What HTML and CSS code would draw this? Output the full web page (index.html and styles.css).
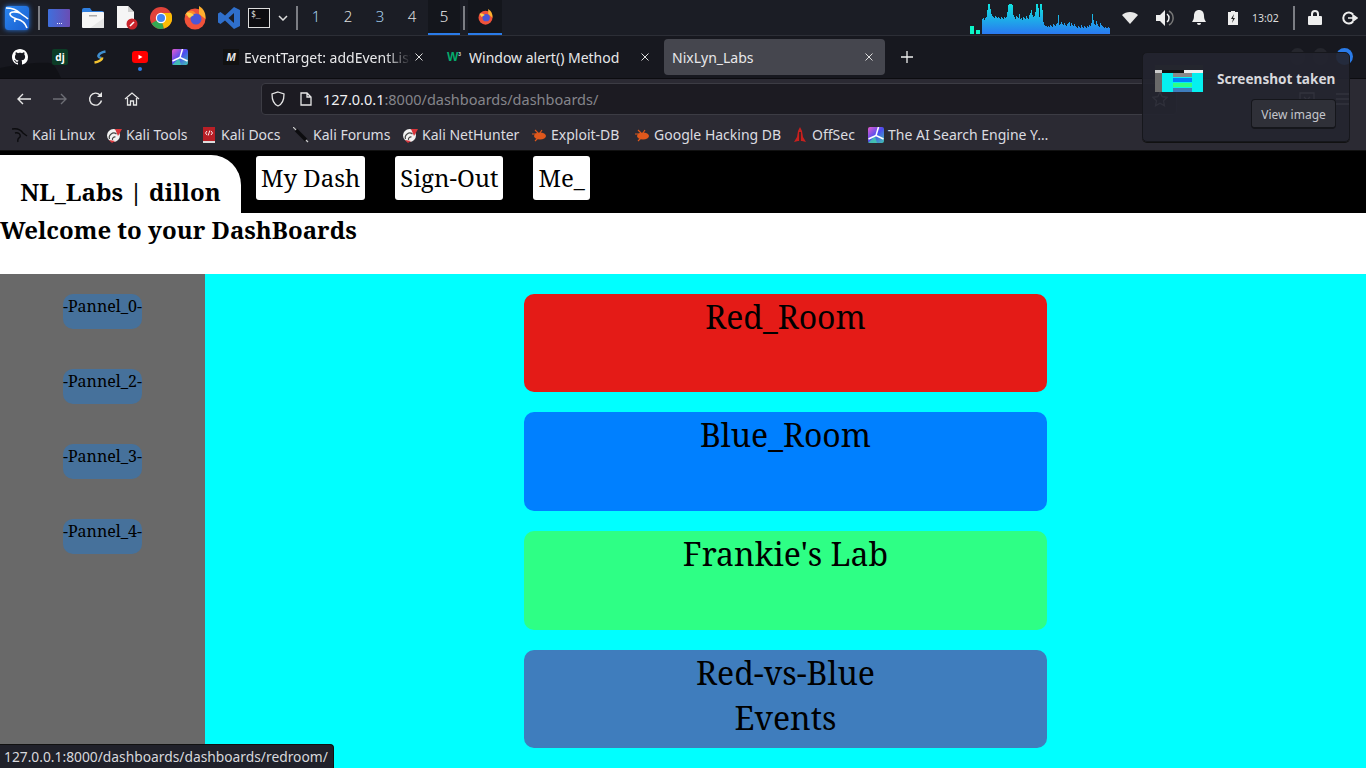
FILE: index.html
```html
<!DOCTYPE html>
<html lang="en">
<head>
<meta charset="utf-8">
<title>NixLyn_Labs</title>
<link rel="stylesheet" href="styles.css">
</head>
<body>
<header class="panel">
  <div class="panel-left">
    <div class="kali"><svg viewBox="0 0 24 24" width="24" height="24"><path d="M1 2C6 2 12 4 15 7c2 2 5 3 8 6M15 7C10 5 5 6 5 8c0 3 4 4 7 5 4 1 8 3 10 9M12 13c-2 0-3 1-2 3" fill="none" stroke="#fff" stroke-width="1.600"/></svg></div>
    <i class="sep sep-a"></i>
    <svg class="app" viewBox="0 0 22 18" width="22" height="18"><defs><linearGradient id="ag" x1="0" y1="0" x2="1" y2="0"><stop offset="0" stop-color="#3f6fdc"/><stop offset="1" stop-color="#6a4db4"/></linearGradient></defs><rect width="22" height="18" rx="1" fill="url(#ag)"/><path d="M9 14.500h1M11 14.500h1M13 14.500h1" stroke="#e8ebff" stroke-width="1.200"/></svg>
    <svg class="app" viewBox="0 0 22 20" width="22" height="20"><path d="M2 0h6l2 3h10a2 2 0 0 1 2 2v3H0V2a2 2 0 0 1 2-2z" fill="#2f7fe0"/><rect y="4" width="22" height="16" rx="1" fill="#f6f6f6"/><rect x="7" y="7" width="8" height="1.500" fill="#aaa"/><path d="M22 10v9a1 1 0 0 1-1 1H8z" fill="#e6e6e6"/></svg>
    <svg class="app" viewBox="0 0 22 24" width="22" height="24"><path d="M1 0h11l6 6v16H1z" fill="#f5f5f5"/><path d="M12 0l6 6h-6z" fill="#cfcfcf"/><circle cx="16" cy="18" r="5.500" fill="#c9242b"/><path d="M14 20l4-4" stroke="#fff" stroke-width="1.600"/></svg>
    <svg class="app" viewBox="0 0 22 22" width="22" height="22"><circle cx="11" cy="11" r="11" fill="#e0433a"/><path d="M11 11L1.500 16.500A11 11 0 0 0 14 21.600z" fill="#34a853"/><path d="M11 11l3 10.600A11 11 0 0 0 21 6H11z" fill="#fbbc05"/><circle cx="11" cy="11" r="5.200" fill="#fff"/><circle cx="11" cy="11" r="4" fill="#4285f4"/></svg>
    <svg class="app" viewBox="0 0 22 24" width="22" height="24"><circle cx="11" cy="13" r="10.500" fill="#f0523a"/><path d="M15 0c5 3 7 8 6.500 13L15 8z" fill="#ffb02e"/><path d="M1 9c2-4 5-5 8-4l5 4-7 3z" fill="#ff8a2a"/><circle cx="12" cy="13" r="5.500" fill="#4a56d6"/><path d="M2 7c3-1 6 0 8 2L5 12z" fill="#ffcf4a"/></svg>
    <svg class="app app-code" viewBox="0 0 22 22" width="22" height="22"><path d="M16 0l6 3v16l-6 3L7 13.500 2.500 17 0 15.500v-9L2.500 5 7 8.500zM16 6l-5.500 5 5.500 5z" fill="#2f6fcb"/></svg>
    <div class="term">$_</div>
    <svg class="chev" viewBox="0 0 10 6" width="10" height="6"><path d="M1 1l4 4 4-4" fill="none" stroke="#ddd" stroke-width="1.500"/></svg>
    <i class="sep"></i>
    <div class="workspaces">
      <span class="ws ws-blue">1</span><span class="ws">2</span><span class="ws ws-blue">3</span><span class="ws">4</span><span class="ws active">5</span>
    </div>
    <i class="sep"></i>
    <div class="task"><svg viewBox="0 0 22 24" width="15" height="16"><circle cx="11" cy="13" r="10.500" fill="#f0523a"/><path d="M15 0c5 3 7 8 6.500 13L15 8z" fill="#ffb02e"/><circle cx="12" cy="13" r="5.500" fill="#4a56d6"/><path d="M2 7c3-1 6 0 8 2L5 12z" fill="#ffcf4a"/></svg></div>
  </div>
  <div class="panel-right">
    <div class="graph" id="graph"><i class="cpu cpu-a"></i><i class="cpu cpu-b"></i></div>
    <svg class="tray tray-wifi" viewBox="0 0 16 12" width="16" height="12"><path d="M0 3c4-4 12-4 16 0l-8 9z" fill="#e8e8e8"/></svg>
    <svg class="tray tray-vol" viewBox="0 0 18 16" width="18" height="16"><path d="M0 5h4l5-5v16l-5-5H0z" fill="#eee"/><path d="M11 4a5 5 0 0 1 0 8" fill="none" stroke="#eee" stroke-width="1.500"/><path d="M13 1a8 8 0 0 1 0 14" fill="none" stroke="#777" stroke-width="1.500"/></svg>
    <svg class="tray tray-bell" viewBox="0 0 14 15" width="14" height="15"><path d="M7 0c3 0 5 2 5 6 0 3 1 4 2 6H0c1-2 2-3 2-6 0-4 2-6 5-6zM5 13h4a2 2 0 0 1-4 0z" fill="#eee"/></svg>
    <svg class="tray tray-bat" viewBox="0 0 10 14" width="10" height="14"><path d="M3 0h4v1h3v13H0V1h3z" fill="#eee"/><path d="M6 3L3 8h2l-1 4 3-5H5z" fill="#222"/></svg>
    <span class="clock">13:02</span>
    <i class="sep sep-r"></i>
    <svg class="tray tray-lock" viewBox="0 0 14 15" width="14" height="15"><path d="M3 6V4a4 4 0 0 1 8 0v2h2a1 1 0 0 1 1 1v7a1 1 0 0 1-1 1H1a1 1 0 0 1-1-1V7a1 1 0 0 1 1-1zm2 0h4V4a2 2 0 0 0-4 0z" fill="#eee"/></svg>
    <svg class="tray tray-exit" viewBox="0 0 16 14" width="16" height="14"><path d="M11 3.500A5.500 5.500 0 1 0 11 10.500" fill="none" stroke="#eee" stroke-width="2"/><path d="M6 7h6M11 4l4 3-4 3z" fill="#eee" stroke="#eee" stroke-width="1.500"/></svg>
  </div>
</header>

<section class="tabbar">
  <svg class="wallpaper" viewBox="0 0 70 16" width="70" height="16"><path d="M0 6C20 2 40 0 50 1c4 1 8 8 11 15H0z" fill="#101116"/></svg>
  <div class="pins">
    <svg class="pin" viewBox="0 0 16 16" width="16" height="16"><path fill="#fff" d="M8 0C3.580 0 0 3.580 0 8c0 3.540 2.290 6.530 5.470 7.590.4.070.55-.17.55-.38 0-.19-.01-.82-.01-1.490-2.010.37-2.530-.49-2.690-.94-.09-.23-.48-.94-.82-1.130-.28-.15-.68-.52-.01-.53.63-.01 1.080.58 1.230.82.720 1.210 1.870.87 2.330.66.070-.52.280-.87.510-1.070-1.780-.2-3.640-.89-3.640-3.950 0-.87.310-1.590.82-2.150-.08-.2-.36-1.020.08-2.120 0 0 .67-.21 2.200.82.640-.18 1.320-.27 2-.27s1.360.09 2 .27c1.530-1.040 2.200-.82 2.200-.82.440 1.100.16 1.920.08 2.120.51.560.82 1.270.82 2.150 0 3.070-1.870 3.750-3.650 3.950.29.250.54.730.54 1.480 0 1.070-.01 1.930-.01 2.200 0 .21.150.46.550.38A8.010 8.010 0 0 0 16 8c0-4.420-3.580-8-8-8z"/></svg>
    <span class="pin pin-dj">dj</span>
    <svg class="pin" viewBox="0 0 16 16" width="16" height="16"><path d="M13.500 2.500C10 3 6 5 6.500 7.500c.3 1 1.500 1.300 3 1.200" fill="none" stroke="#3f8fd0" stroke-width="2.600"/><path d="M2.500 13.500C6 13 10.500 11 10 8.500" fill="none" stroke="#f2c230" stroke-width="2.600"/></svg>
    <span class="pin pin-yt"><svg viewBox="0 0 16 12" width="16" height="12"><rect width="16" height="12" rx="3" fill="#f00"/><path d="M6.500 3.800l4 2.200-4 2.200z" fill="#fff"/></svg><i class="dot"></i></span>
    <svg class="pin" viewBox="0 0 16 16" width="16" height="16"><defs><linearGradient id="pg" x1="0" y1="0" x2="1" y2="1"><stop offset="0" stop-color="#e85bd0"/><stop offset=".5" stop-color="#4a4cf0"/><stop offset="1" stop-color="#40c8b0"/></linearGradient></defs><rect width="16" height="16" rx="2" fill="url(#pg)"/><path d="M0 16h9L7 9z" fill="#40e0a0" opacity=".7"/><path d="M8 8.500L10.500 0M8 8.500L0.500 12M8 8.500l7.500 3.500" stroke="#fff" stroke-width="1.500"/></svg>
  </div>
  <div class="tab tab-1"><span class="fav-m">M</span><span class="tab-label fade">EventTarget: addEventList</span><svg class="tab-x" viewBox="0 0 10 10" width="10" height="10"><path d="M1.500 1.500l7 7M8.500 1.500l-7 7" stroke="#ddd" stroke-width="1"/></svg></div>
  <div class="tab tab-2"><span class="fav-w">W<sup>3</sup></span><span class="tab-label">Window alert() Method</span><svg class="tab-x" viewBox="0 0 10 10" width="10" height="10"><path d="M1.500 1.500l7 7M8.500 1.500l-7 7" stroke="#ddd" stroke-width="1"/></svg></div>
  <div class="tab tab-3"><span class="tab-label">NixLyn_Labs</span><svg class="tab-x" viewBox="0 0 10 10" width="10" height="10"><path d="M1.500 1.500l7 7M8.500 1.500l-7 7" stroke="#ddd" stroke-width="1"/></svg></div>
  <svg class="newtab" viewBox="0 0 14 14" width="14" height="14"><path d="M7 1v12M1 7h12" stroke="#eee" stroke-width="1.300"/></svg>
  <div class="ghosts"><i class="ghost"></i><i class="ghost"></i><i class="ghost ghost-blue"></i></div>
</section>

<nav class="navbar">
  <svg class="nav-ico" viewBox="0 0 16 16" width="16" height="16"><path d="M15 8H2M7 3L2 8l5 5" fill="none" stroke="#e6e6e6" stroke-width="1.400"/></svg>
  <svg class="nav-ico" viewBox="0 0 16 16" width="16" height="16"><path d="M1 8h13M9 3l5 5-5 5" fill="none" stroke="#6d6e75" stroke-width="1.400"/></svg>
  <svg class="nav-ico" viewBox="0 0 16 16" width="16" height="16"><path d="M13.500 9.500A6 6 0 1 1 12 4" fill="none" stroke="#e6e6e6" stroke-width="1.400"/><path d="M14 1v5H9z" fill="#e6e6e6"/></svg>
  <svg class="nav-ico" viewBox="0 0 16 16" width="16" height="16"><path d="M1 8l7-6 7 6M3.500 7v7h3v-4h3v4h3V7" fill="none" stroke="#e6e6e6" stroke-width="1.300"/></svg>
  <div class="urlbar">
    <svg class="url-ico url-shield" viewBox="0 0 16 16" width="16" height="16"><path d="M8 1l6 2c0 6-1 10-6 12C3 13 2 9 2 3z" fill="none" stroke="#e6e6e6" stroke-width="1.300"/></svg>
    <svg class="url-ico" viewBox="0 0 12 14" width="12" height="14"><path d="M1 1h6l4 4v8H1zM7 1v4h4" fill="none" stroke="#e6e6e6" stroke-width="1.300"/></svg>
    <span class="url"><b>127.0.0.1</b>:8000/dashboards/dashboards/</span>
    <svg class="star" viewBox="0 0 16 16" width="16" height="16"><path d="M8 1l2.200 4.700 5 .6-3.700 3.500 1 5L8 12.300 3.500 14.800l1-5L.8 6.300l5-.6z" fill="none" stroke="#c8c8cc" stroke-width="1.200"/></svg>
  </div>
  <svg class="nav-ico pocket" viewBox="0 0 16 16" width="16" height="16"><path d="M1 2h14v6a7 7 0 0 1-14 0zM5 6l3 3 3-3" fill="none" stroke="#ddd" stroke-width="1.300"/></svg>
  <svg class="nav-ico" viewBox="0 0 16 16" width="16" height="16"><path d="M1 3h14M1 8h14M1 13h14" stroke="#ddd" stroke-width="1.300"/></svg>
</nav>

<section class="bookmarks">
  <span class="bm"><svg viewBox="0 0 16 16" width="16" height="16"><path d="M0 2c5-1 9 1 11 4l4 3M3 6c3-1 6 1 5 4-1 1-3 1-2 5" fill="none" stroke="#0c0c0f" stroke-width="1.400"/></svg>Kali Linux</span>
  <span class="bm"><svg viewBox="0 0 16 16" width="16" height="16"><circle cx="7.500" cy="8.500" r="6.500" fill="#f2f2f2"/><path d="M9 2h7l-4 7zM3 13l3 3 3-2z" fill="#d8343a"/><path d="M3.500 12a4.500 4.500 0 0 1 7-5M6.500 13a2.500 2.500 0 0 1 3-3" fill="none" stroke="#444" stroke-width="1.200"/></svg>Kali Tools</span>
  <span class="bm"><svg viewBox="0 0 16 16" width="16" height="16"><rect x="2" y="0" width="12" height="15" fill="#b81f26"/><rect x="2" y="14" width="12" height="2" fill="#ddd"/><path d="M6 4L4.500 6 6 8M10 4l1.500 2L10 8M8.800 3.500L7.200 8.500" stroke="#fff" fill="none" stroke-width=".9"/></svg>Kali Docs</span>
  <span class="bm"><svg viewBox="0 0 16 16" width="16" height="16"><path d="M0 0l15 15" stroke="#ccc" stroke-width="1.200"/><path d="M3 3l10 10" stroke="#0c0c0f" stroke-width="3.500"/></svg>Kali Forums</span>
  <span class="bm"><svg viewBox="0 0 16 16" width="16" height="16"><circle cx="7.500" cy="8.500" r="6.500" fill="#f2f2f2"/><path d="M9 2h7l-4 7zM3 13l3 3 3-2z" fill="#d8343a"/><path d="M3.500 12a4.500 4.500 0 0 1 7-5M6.500 13a2.500 2.500 0 0 1 3-3" fill="none" stroke="#444" stroke-width="1.200"/></svg>Kali NetHunter</span>
  <span class="bm"><svg viewBox="0 0 16 16" width="16" height="16"><ellipse cx="9" cy="9" rx="6" ry="3.500" fill="#e0581c"/><path d="M1 7h5M4 3l3 3M4 14l3-3M11 3L9 6" stroke="#e0581c" stroke-width="1.200"/></svg>Exploit-DB</span>
  <span class="bm"><svg viewBox="0 0 16 16" width="16" height="16"><ellipse cx="9" cy="9" rx="6" ry="3.500" fill="#e0581c"/><path d="M1 7h5M4 3l3 3M4 14l3-3M11 3L9 6" stroke="#e0581c" stroke-width="1.200"/></svg>Google Hacking DB</span>
  <span class="bm"><svg viewBox="0 0 16 16" width="16" height="16"><path d="M8 0l2 4 1 6 3 5-4-1H6l-4 1 3-5 1-6z" fill="#c8201f"/><path d="M8 5v9" stroke="#222" stroke-width="1.500"/></svg>OffSec</span>
  <span class="bm"><svg viewBox="0 0 16 16" width="16" height="16"><rect width="16" height="16" rx="2" fill="url(#pg)"/><path d="M0 16h9L7 9z" fill="#40e0a0" opacity=".7"/><path d="M8 8.500L10.500 0M8 8.500L0.500 12M8 8.500l7.500 3.500" stroke="#fff" stroke-width="1.500"/></svg>The AI Search Engine Y…</span>
</section>

<main class="page">
  <div class="site-nav">
    <div class="brand">NL_Labs | dillon</div>
    <a class="nav-btn nb-1">My Dash</a>
    <a class="nav-btn nb-2">Sign-Out</a>
    <a class="nav-btn nb-3">Me_</a>
  </div>
  <h1 class="welcome">Welcome to your DashBoards</h1>
  <div class="dash">
    <aside class="side">
      <a class="pannel">-Pannel_0-</a>
      <a class="pannel">-Pannel_2-</a>
      <a class="pannel">-Pannel_3-</a>
      <a class="pannel">-Pannel_4-</a>
    </aside>
    <div class="rooms">
      <a class="room red">Red_Room</a>
      <a class="room blue">Blue_Room</a>
      <a class="room green">Frankie's Lab</a>
      <a class="room steel">Red-vs-Blue<br>Events</a>
    </div>
  </div>
</main>

<div class="status">127.0.0.1:8000/dashboards/dashboards/redroom/</div>

<aside class="toast">
  <div class="thumb">
    <i class="th-top"></i><i class="th-white"></i>
    <div class="th-body"><i class="th-side"></i><div class="th-main"><i class="th-r"></i><i class="th-b"></i><i class="th-g"></i><i class="th-s"></i></div></div>
  </div>
  <div class="toast-title">Screenshot taken</div>
  <div class="toast-btn">View image</div>
</aside>
<script src="graph.js"></script>
</body>
</html>
```
FILE: styles.css
```css
* { box-sizing: border-box; }
html, body { margin: 0; height: 768px; overflow: hidden; }
body { position: relative; background: #000; font-family: "Noto Sans", sans-serif; }

.panel { height: 36px; background: #1b1d25; border-bottom: 1px solid #2c2e36; display: flex; justify-content: space-between; color: #eee; }
.panel-left, .panel-right { display: flex; align-items: center; }
.kali { width: 24px; height: 24px; margin-left: 5px; background: linear-gradient(135deg, #2a86f0, #1a5fd0); border-radius: 3px; box-shadow: 0 0 5px #2a7be8; flex: none; }
.kali svg { display: block; }
.sep { width: 2px; height: 24px; background: #7c7e84; display: block; flex: none; }
.sep-a { margin: 0 8px 0 9px; }
.app { margin-right: 12px; flex: none; }
.app-code { margin-right: 8px; }
.term { width: 22px; height: 20px; background: #0c0c10; border: 1px solid #ddd; font: 8px/12px "DejaVu Sans Mono", monospace; padding-left: 2px; color: #eee; flex: none; }
.chev { margin: 0 8px; flex: none; }
.workspaces { display: flex; margin: 0 3px 0 2px; height: 35px; }
.ws { width: 32px; height: 35px; text-align: center; font-size: 15px; font-weight: 300; line-height: 33px; color: #ddd; }
.ws-blue { color: #a8d0f0; }
.ws.active { background: #14161c; border-bottom: 2px solid #2a7be8; color: #eee; }
.task { width: 34px; height: 35px; margin-left: 3px; background: #14161c; border-bottom: 2px solid #2a7be8; display: flex; align-items: center; justify-content: center; }
.panel-right { padding-right: 8px; }
.graph { width: 140px; height: 30px; display: flex; align-items: flex-end; margin-right: 12px; align-self: flex-end; margin-bottom: 1px; overflow: hidden; }
.graph i { display: block; flex: none; width: 1px; background: linear-gradient(#10e4e0, #2a78f0) bottom / 100% 30px no-repeat; }
.graph .cpu { background: #0cf5c8; }
.graph .cpu-a { width: 4px; height: 8px; margin-right: 2px; }
.graph .cpu-b { width: 4px; height: 4px; margin-right: 2px; }
.tray { flex: none; }
.tray-wifi { margin-right: 18px; }
.tray-vol { margin-right: 18px; }
.tray-bell { margin-right: 22px; }
.tray-bat { margin-right: 14px; }
.clock { font-size: 10.5px; color: #ddd; margin-right: 14px; width: 27px; white-space: nowrap; }
.sep-r { margin-right: 13px; }
.tray-lock { margin-right: 20px; }

.tabbar { position: relative; height: 43px; background: #17181f; display: flex; align-items: center; color: #e8e8ea; font-size: 14px; border-bottom: 1px solid #0c0c10; }
.wallpaper { position: absolute; left: 0; bottom: 0; }
.pins { position: relative; display: flex; align-items: center; width: 215px; padding-left: 12px; gap: 24px; flex: none; }
.pin { flex: none; }
.pin-dj { width: 16px; height: 16px; background: #0c3c26; border-radius: 2px; color: #fff; font: bold 10px/16px "Noto Sans", sans-serif; text-align: center; }
.pin-yt { position: relative; display: block; width: 16px; height: 12px; line-height: 0; }
.dot { position: absolute; left: 6px; top: 16px; width: 4px; height: 4px; border-radius: 50%; background: #2a7be8; }
.tab { height: 36px; display: flex; align-items: center; border-radius: 4px; padding: 0 8px; position: relative; flex: none; }
.tab-1 { width: 220px; }
.tab-2 { width: 222px; margin-left: 4px; }
.tab-3 { width: 221px; margin-left: 3px; background: #45464e; }
.tab-label { white-space: nowrap; overflow: hidden; flex: 1; }
.fade { -webkit-mask-image: linear-gradient(90deg, #000 85%, transparent); mask-image: linear-gradient(90deg, #000 85%, transparent); }
.fav-m { font: italic bold 11px/16px "Liberation Sans", sans-serif; width: 16px; margin-right: 5px; background: #111; text-align: center; flex: none; }
.fav-w { font: bold 12px/16px "Liberation Sans", sans-serif; width: 16px; margin-right: 6px; color: #04aa6d; flex: none; white-space: nowrap; }
.fav-w sup { font-size: 5px; line-height: 0; color: #ccc; }
.tab-x { margin: 0 3px 0 3px; flex: none; }
.newtab { margin-left: 15px; flex: none; }
.ghosts { position: absolute; left: 1290px; top: 12px; display: flex; gap: 8px; }
.ghost { display: block; width: 15px; height: 17px; border-radius: 50%; background: #25262d; }
.ghost-blue { width: 17px; background: #2a7be8; margin-left: 0; }

.navbar { height: 42px; background: #2b2a33; display: flex; align-items: center; padding: 0 0 2px 16px; }
.nav-ico { flex: none; margin-right: 20px; }
.urlbar { width: 916px; height: 32px; margin: 0 0 0 101px; background: #1c1b22; border: 1px solid #3c3c44; border-radius: 4px; display: flex; align-items: center; padding-left: 8px; flex: none; }
.pocket { margin-left: 122px; }
.url-ico { margin-right: 11px; flex: none; }
.url-shield { margin-right: 14px; }
.url { font-size: 14.5px; color: #85858b; white-space: nowrap; }
.url b { font-weight: 400; color: #f0f0f2; }
.star { margin-left: auto; margin-right: 8px; flex: none; }

.bookmarks { height: 30px; background: #2b2a33; display: grid; grid-template-columns: 94px 95px 92px 109px 129px 103px 158px 76px auto; align-items: center; padding: 0 0 2px 12px; font-size: 14px; color: #dcdce0; overflow: hidden; border-bottom: 1px solid #111; }
.bm { display: flex; align-items: center; gap: 4px; white-space: nowrap; }
.bm svg { flex: none; }

.page { height: 617px; background: #fff; font-family: "Noto Serif", "Droid Serif", "DejaVu Serif", serif; color: #000; overflow: hidden; }
.site-nav { height: 62px; background: #000; display: flex; align-items: flex-start; padding-top: 4px; }
.brand { width: 241px; height: 58px; background: #fff; border-top-right-radius: 30px; font-size: 24px; font-weight: 700; text-align: center; padding-top: 19px; line-height: 36px; }
.nav-btn { height: 44px; margin-top: 1px; background: #fff; border-radius: 3px; font-size: 24px; line-height: 44px; padding: 0 5px; }
.nb-1 { margin-left: 15px; }
.nb-2 { margin-left: 30px; }
.nb-3 { margin-left: 30px; }
.welcome { height: 61px; margin: 0; font-size: 24px; line-height: 34px; font-weight: 700; }
.dash { display: flex; height: 494px; }
.side { width: 205px; background: #696969; display: flex; flex-direction: column; align-items: center; gap: 40px; padding-top: 20px; flex: none; }
.pannel { height: 35px; background: #46719b; border-radius: 10px; font-size: 16px; line-height: 24px; flex: none; }
.rooms { flex: 1; background: #0ff; display: flex; flex-direction: column; align-items: center; gap: 19.900px; padding: 19.600px 0 0 0; }
.room { width: 523px; height: 98.800px; border-radius: 10px; font-size: 32px; line-height: 45px; text-align: center; flex: none; }
.red { background: #e41b17; }
.blue { background: #0080ff; }
.green { background: #2eff85; }
.steel { background: #3f7dbd; }

.status { position: absolute; left: 0; bottom: 0; height: 24px; padding: 0 5px 0 4px; background: #20212a; border: 1px solid #111; border-left: 0; border-bottom: 0; border-top-right-radius: 4px; color: #d8d8dc; font-size: 13.800px; line-height: 24px; white-space: nowrap; }

.toast { position: absolute; left: 1142px; top: 52px; width: 208px; height: 90px; background: rgba(36, 37, 47, .93); border: 1px solid #16171c; border-radius: 5px; box-shadow: 0 1px 0 #111; color: #d8d8dc; }
.thumb { position: absolute; left: 12px; top: 12px; width: 48px; height: 27px; background: #222; display: flex; flex-direction: column; }
.th-top { display: block; height: 5px; background: #24262e; }
.th-white { display: block; height: 3px; background: linear-gradient(90deg, #ccc 15%, #111 15%, #111 60%, #eee 60%); }
.th-body { display: flex; flex: 1; }
.th-side { display: block; width: 7px; background: #696969; }
.th-main { flex: 1; background: #05f0f0; display: flex; flex-direction: column; align-items: center; gap: 1px; }
.th-main i { display: block; width: 19px; height: 4px; }
.th-r { background: #888; }
.th-b { background: #0080ff; }
.th-g { background: #2eff85; }
.th-s { background: #3f7dbd; }
.toast-title { position: absolute; left: 74px; top: 16px; font-size: 13.600px; font-weight: 700; white-space: nowrap; }
.toast-btn { position: absolute; left: 108px; top: 46px; width: 85px; height: 30px; background: #2f3038; border: 1px solid #15161b; border-bottom-width: 2px; border-radius: 4px; font-size: 12px; line-height: 29px; text-align: center; color: #c4c6cc; }
```
FILE: graph.js
```js
var heights = [15,16,14,16,17,24,30,30,25,20,18,17,16,18,17,16,17,16,15,17,16,15,17,16,17,22,29,30,30,30,29,19,17,15,18,17,16,20,15,16,14,17,16,15,18,16,15,19,21,24,19,17,18,22,30,30,26,17,30,30,24,12,9,8,8,7,8,7,9,8,7,10,9,8,10,11,19,9,10,12,10,9,11,9,8,10,11,12,8,11,9,8,10,8,7,6,8,7,6,9,7,6,8,7,6,8,7,9,8,11,20,14,10,9,13,10,8,7,11,9,8,7,6,7,6,6,7,6];
var graph = document.getElementById('graph');
heights.forEach(function (value) {
  var bar = document.createElement('i');
  bar.style.height = value + 'px';
  graph.appendChild(bar);
});
```
